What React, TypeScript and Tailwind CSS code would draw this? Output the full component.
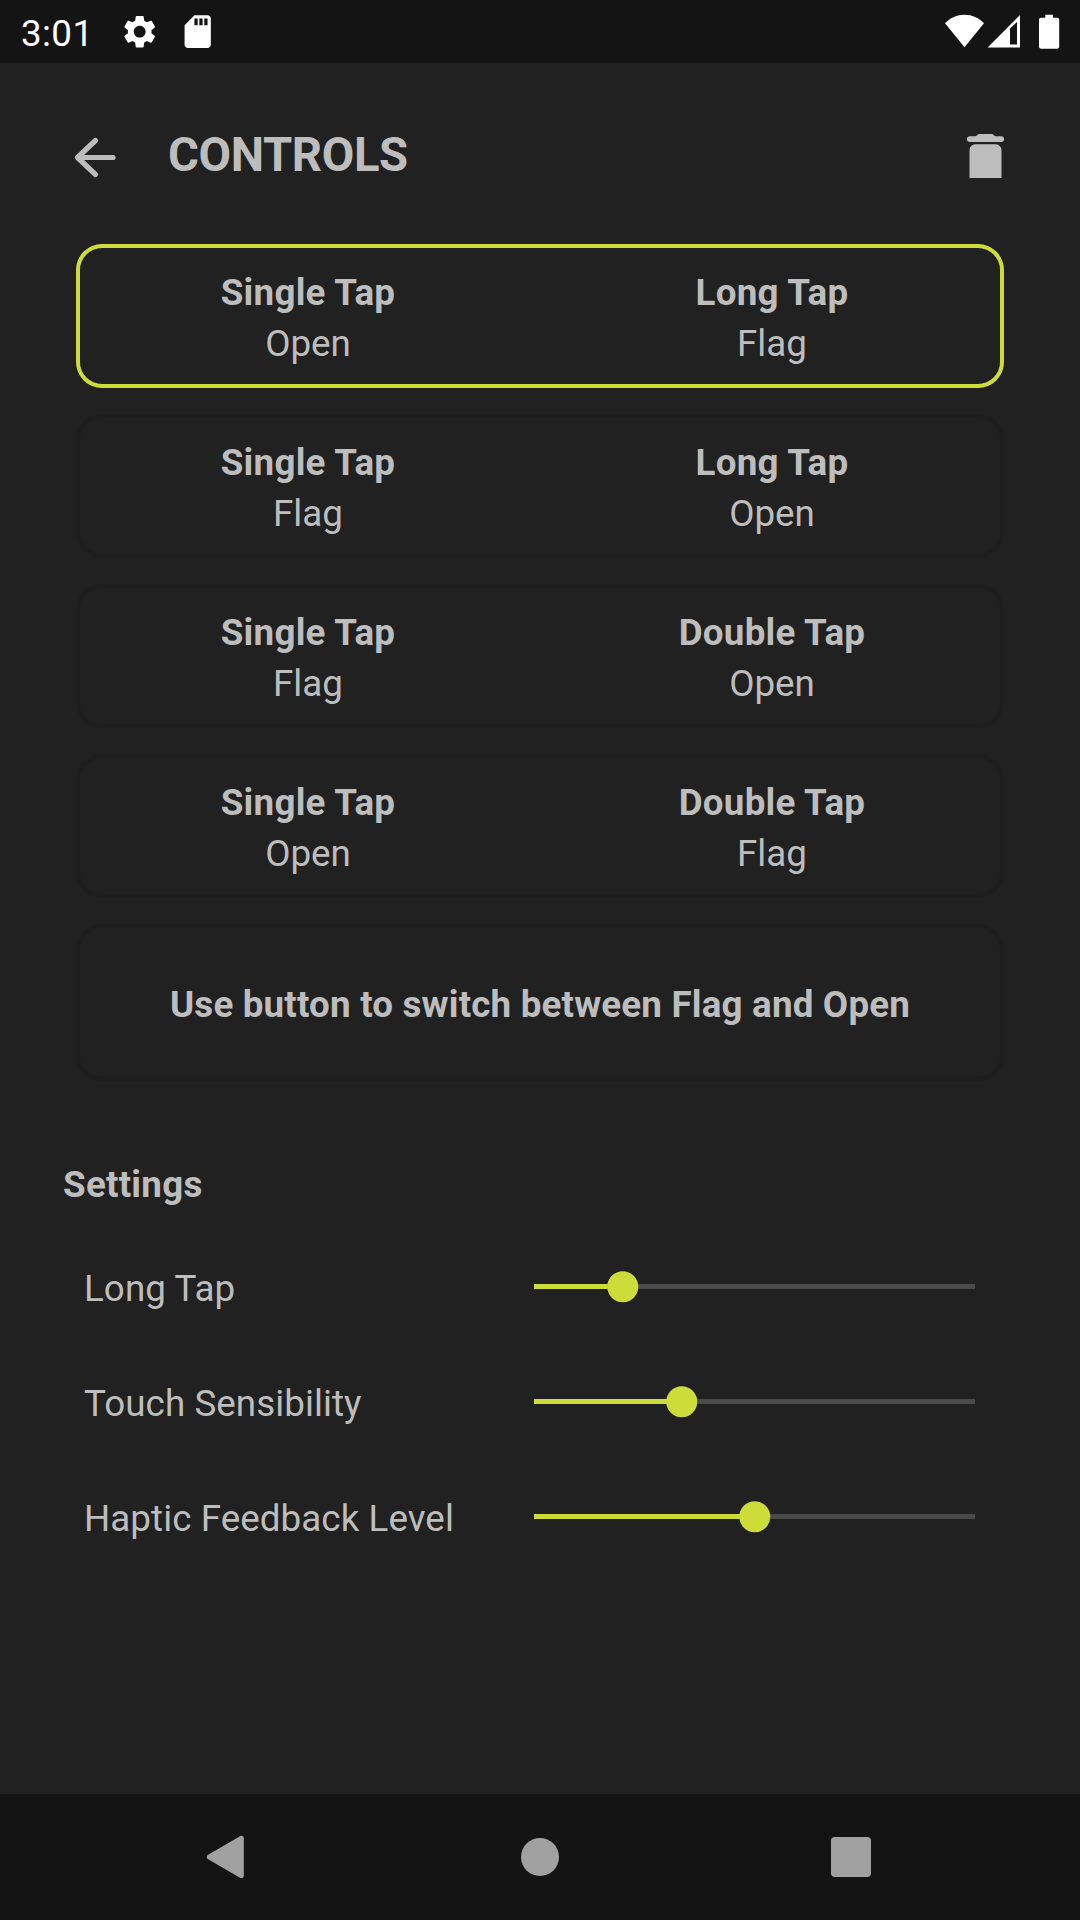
import React from "react";
import { MdSdCard, MdSettings } from "react-icons/md";

type Action = { gesture: string; action: string };

const OPTIONS: { actions: [Action, Action]; selected?: boolean }[] = [
  { actions: [{ gesture: "Single Tap", action: "Open" }, { gesture: "Long Tap", action: "Flag" }], selected: true },
  { actions: [{ gesture: "Single Tap", action: "Flag" }, { gesture: "Long Tap", action: "Open" }] },
  { actions: [{ gesture: "Single Tap", action: "Flag" }, { gesture: "Double Tap", action: "Open" }] },
  { actions: [{ gesture: "Single Tap", action: "Open" }, { gesture: "Double Tap", action: "Flag" }] },
];

const SLIDERS = [
  { label: "Long Tap", value: 20.1 },
  { label: "Touch Sensibility", value: 33.45 },
  { label: "Haptic Feedback Level", value: 50 },
];

function StatusBar() {
  return (
    <div className="flex h-[63px] items-center bg-[#141414] text-white">
      <span className="ml-[21px] mt-[4px] w-[99px] text-[36.75px] leading-[43px] tracking-[0.4px]">3:01</span>
      <MdSettings size={39.4} className="shrink-0" />
      <MdSdCard size={39.4} className="ml-[19px] shrink-0" />
      <svg width="116" height="36" viewBox="0 0 116 36" className="ml-auto mr-[19px]" fill="currentColor">
        <path d="M0 9.3C5.5 3.6 12 .7 19.5.7S33.300 3.600 39 9.300L19.500 33.300Z" />
        <path fillRule="evenodd" d="M42.600 33.400L75 1V33.400ZM65 14.500V30.600H72V8Z" />
        <path d="M100.300.7h7.700v3h4.200c1.200 0 2 .8 2 1.900v27.200c0 1.100-.8 1.900-2 1.900H96c-1.200 0-2-.8-2-1.900V5.600c0-1.100.8-1.900 2-1.900h4.300Z" />
      </svg>
    </div>
  );
}

function Header() {
  return (
    <header className="flex h-[118px] items-start pt-[64px]">
      <svg width="44" height="44" viewBox="0 0 44 44" className="ml-[73px] mt-[8px]" fill="none" stroke="currentColor" strokeWidth="5.200" strokeLinecap="round" strokeLinejoin="round">
        <path d="M22.500 5.500L4.500 22.500L22.500 39.500M5 22.500H40" />
      </svg>
      <h1 className="ml-[51px] mt-px text-[47.25px] font-bold leading-[55px] tracking-[-0.4px]">CONTROLS</h1>
      <svg width="37" height="44" viewBox="0 0 37 44" className="ml-auto mr-[76px] mt-[7px]" fill="currentColor">
        <path d="M12 0H25C26.500 0 27 2.300 29 2.300H34.300A2.850 2.850 0 0 1 34.300 8H2.700A2.850 2.850 0 0 1 2.700 2.300H8C10 2.300 10.500 0 12 0Z" />
        <path d="M2.500 44V16A5.700 5.700 0 0 1 8.200 10.300H28.800A5.700 5.700 0 0 1 34.500 16V44Z" />
      </svg>
    </header>
  );
}

function OptionCard({ actions, selected }: { actions: Action[]; selected?: boolean }) {
  return (
    <div
      className={`grid h-[144px] grid-cols-2 rounded-[26px] pt-[27px] text-center ring-4 ring-inset ${
        selected ? "ring-[#cddc39]" : "ring-[#1e1e1e]"
      }`}
    >
      {actions.map((a) => (
        <div key={a.gesture} className="flex flex-col gap-2">
          <span className="font-bold tracking-[0.25px]">{a.gesture}</span>
          <span>{a.action}</span>
        </div>
      ))}
    </div>
  );
}

function SliderRow({ label, value }: { label: string; value: number }) {
  return (
    <div className="flex h-[115px] items-start">
      <span className="ml-[84px] w-[450px] whitespace-nowrap tracking-[0.07px]">{label}</span>
      <div className="relative mt-[17px] h-[5px] w-[441px] bg-[#4a4a4a]">
        <div className="h-full bg-[#cddc39]" style={{ width: `${value}%` }} />
        <div
          className="absolute top-1/2 size-[31.500px] -translate-x-1/2 -translate-y-1/2 rounded-full bg-[#cddc39]"
          style={{ left: `${value}%` }}
        />
      </div>
    </div>
  );
}

function NavBar() {
  return (
    <nav className="flex h-[126px] items-center justify-between bg-[#141414] pl-[206px] pr-[209px] text-[#a1a1a1]">
      <svg width="38" height="44" viewBox="0 0 38 44" fill="currentColor">
        <path d="M1.700 20L34 1.200C36 .200 37.800 1 37.800 3.200V40.800C37.800 43 36 43.800 34 42.800L1.700 24Q-.300 22 1.700 20Z" />
      </svg>
      <div className="ml-[5px] size-[38px] rounded-full bg-[#a1a1a1]" />
      <div className="size-[40px] rounded-[4px] bg-[#a1a1a1]" />
    </nav>
  );
}

export default function App() {
  return (
    <div className="flex h-[1920px] w-[1080px] flex-col overflow-hidden bg-[#212121] font-['Roboto',sans-serif] text-[36.75px] leading-[43px] text-[#bdbdbd]">
      <StatusBar />
      <Header />
      <main className="flex grow flex-col">
        <section className="mx-[76px] mt-[63px] flex flex-col gap-[26px]">
          {OPTIONS.map((o, i) => (
            <OptionCard key={i} actions={o.actions} selected={o.selected} />
          ))}
          <div className="h-[157px] rounded-[26px] pt-[59px] text-center font-bold tracking-[0.18px] ring-4 ring-inset ring-[#1e1e1e]">
            Use button to switch between Flag and Open
          </div>
        </section>
        <section className="mt-[82px]">
          <h2 className="ml-[63px] font-bold tracking-[0.25px]">Settings</h2>
          <div className="mt-[61px]">
            {SLIDERS.map((s) => (
              <SliderRow key={s.label} label={s.label} value={s.value} />
            ))}
          </div>
        </section>
      </main>
      <NavBar />
    </div>
  );
}
